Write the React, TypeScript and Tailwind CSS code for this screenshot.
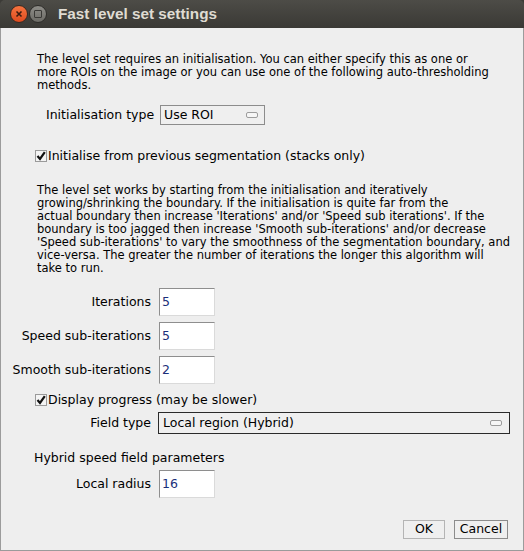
import React from 'react';

const font = { fontFamily: '"DejaVu Sans", Verdana, sans-serif' };

const intro = [
  'The level set requires an initialisation. You can either specify this as one or',
  'more ROIs on the image or you can use one of the following auto-thresholding',
  'methods.',
];

const help = [
  'The level set works by starting from the initialisation and iteratively',
  'growing/shrinking the boundary. If the initialisation is quite far from the',
  "actual boundary then increase 'Iterations' and/or 'Speed sub iterations'. If the",
  "boundary is too jagged then increase 'Smooth sub-iterations' and/or decrease",
  "'Speed sub-iterations' to vary the smoothness of the segmentation boundary, and",
  'vice-versa. The greater the number of iterations the longer this algorithm will',
  'take to run.',
];

function Check() {
  return (
    <svg width="12" height="12" viewBox="0 0 12 12" className="shrink-0">
      <rect x="0.5" y="0.5" width="11" height="11" fill="#f4f4f4" stroke="#9a9a9a" />
      <path d="M2.5 6 L5 9 L9.8 2.2" fill="none" stroke="#111" strokeWidth="2.2" />
    </svg>
  );
}

function ComboIcon() {
  return <span className="block w-[12px] h-[6px] rounded-[2px] border border-[#9c9c9c] bg-[#f6f6f6]" />;
}

function NumField({ value }: { value: string }) {
  return (
    <div className="w-[56px] h-[28px] bg-white border-t border-l border-[#8e8e8e] border-r-[#dadada] border-b-[#dadada] border-r border-b flex items-center pl-[2px] text-[12.5px] text-[#1b2f7a]">
      {value}
    </div>
  );
}

function Row({ label, children }: { label: string; children: React.ReactNode }) {
  return (
    <div className="flex items-center">
      <div className="w-[158px] text-right pr-[8px] text-[12.5px] text-black">{label}</div>
      {children}
    </div>
  );
}

function Lines({ lines }: { lines: string[] }) {
  return (
    <div className="pl-[36px] text-[11.5px] leading-[13px] whitespace-nowrap">
      {lines.map((l) => (
        <div key={l}>{l}</div>
      ))}
    </div>
  );
}

export default function App() {
  return (
    <div className="w-[524px] h-[551px] flex flex-col bg-[#3c3b37]" style={font}>
      <div className="h-[28px] shrink-0 flex items-center rounded-t-[5px] bg-gradient-to-b from-[#4d4c47] to-[#3a3935] pl-[10px]">
        <div className="w-[18px] h-[18px] rounded-full bg-gradient-to-b from-[#f6743f] to-[#de4a1e] flex items-center justify-center border border-[#3a2a22]">
          <svg width="8" height="8" viewBox="0 0 8 8">
            <path d="M1.5 1.5 L6.5 6.5 M6.5 1.5 L1.5 6.5" stroke="#3b1c10" strokeWidth="1.6" />
          </svg>
        </div>
        <div className="ml-[1px] w-[18px] h-[18px] rounded-full bg-gradient-to-b from-[#8e8d88] to-[#6c6b66] flex items-center justify-center border border-[#2e2d2a]">
          <span className="block w-[8px] h-[8px] border border-[#3a3936] rounded-[1px]" />
        </div>
        <span
          className="ml-[11px] text-[15.3px] font-bold text-[#dfdbd2]"
          style={{ fontFamily: '"Liberation Sans", Arial, sans-serif' }}
        >
          Fast level set settings
        </span>
      </div>

      <div className="flex-1 bg-[#eeeeee] border-l border-r border-b border-[#9b9b9b] flex flex-col text-black">
        <div className="pt-[25px]">
          <Lines lines={intro} />
        </div>

        <div className="mt-[13px] flex items-center pl-[45px]">
          <span className="w-[114px] text-[12.5px]">Initialisation type</span>
          <div className="w-[105px] h-[20px] border border-[#8c8c8c] bg-[#efefef] flex items-center justify-between pl-[3px] pr-[6px] text-[12.5px]">
            <span>Use ROI</span>
            <ComboIcon />
          </div>
        </div>

        <div className="mt-[23px] h-[16px] flex items-center pl-[34px] gap-[1px] text-[12.5px]">
          <Check />
          <span>Initialise from previous segmentation (stacks only)</span>
        </div>

        <div className="mt-[20px]">
          <Lines lines={help} />
        </div>

        <div className="mt-[13px] flex flex-col gap-[6px]">
          <Row label="Iterations"><NumField value="5" /></Row>
          <Row label="Speed sub-iterations"><NumField value="5" /></Row>
          <Row label="Smooth sub-iterations"><NumField value="2" /></Row>
        </div>

        <div className="mt-[8px] h-[16px] flex items-center pl-[34px] gap-[1px] text-[12.5px]">
          <Check />
          <span>Display progress (may be slower)</span>
        </div>

        <div className="mt-[4px] flex items-center">
          <div className="w-[157px] text-right pr-[7px] text-[12.5px]">Field type</div>
          <div className="w-[352px] h-[22px] border border-[#2a2a2a] bg-[#efefef] flex items-center justify-between pl-[4px] pr-[7px] text-[12.5px]">
            <span>Local region (Hybrid)</span>
            <ComboIcon />
          </div>
        </div>

        <div className="mt-[16px] h-[16px] flex items-center pl-[33px] text-[12.5px]">Hybrid speed field parameters</div>

        <div className="mt-[4px]">
          <Row label="Local radius"><NumField value="16" /></Row>
        </div>

        <div className="mt-[22px] flex justify-end gap-[9px] pr-[15px] text-[12.5px]">
          <div className="w-[42px] h-[19px] border border-[#b4b4b4] bg-[#efefef] flex items-center justify-center">OK</div>
          <div className="w-[54px] h-[19px] border border-[#8c8c8c] bg-[#efefef] flex items-center justify-center">Cancel</div>
        </div>
      </div>
    </div>
  );
}
